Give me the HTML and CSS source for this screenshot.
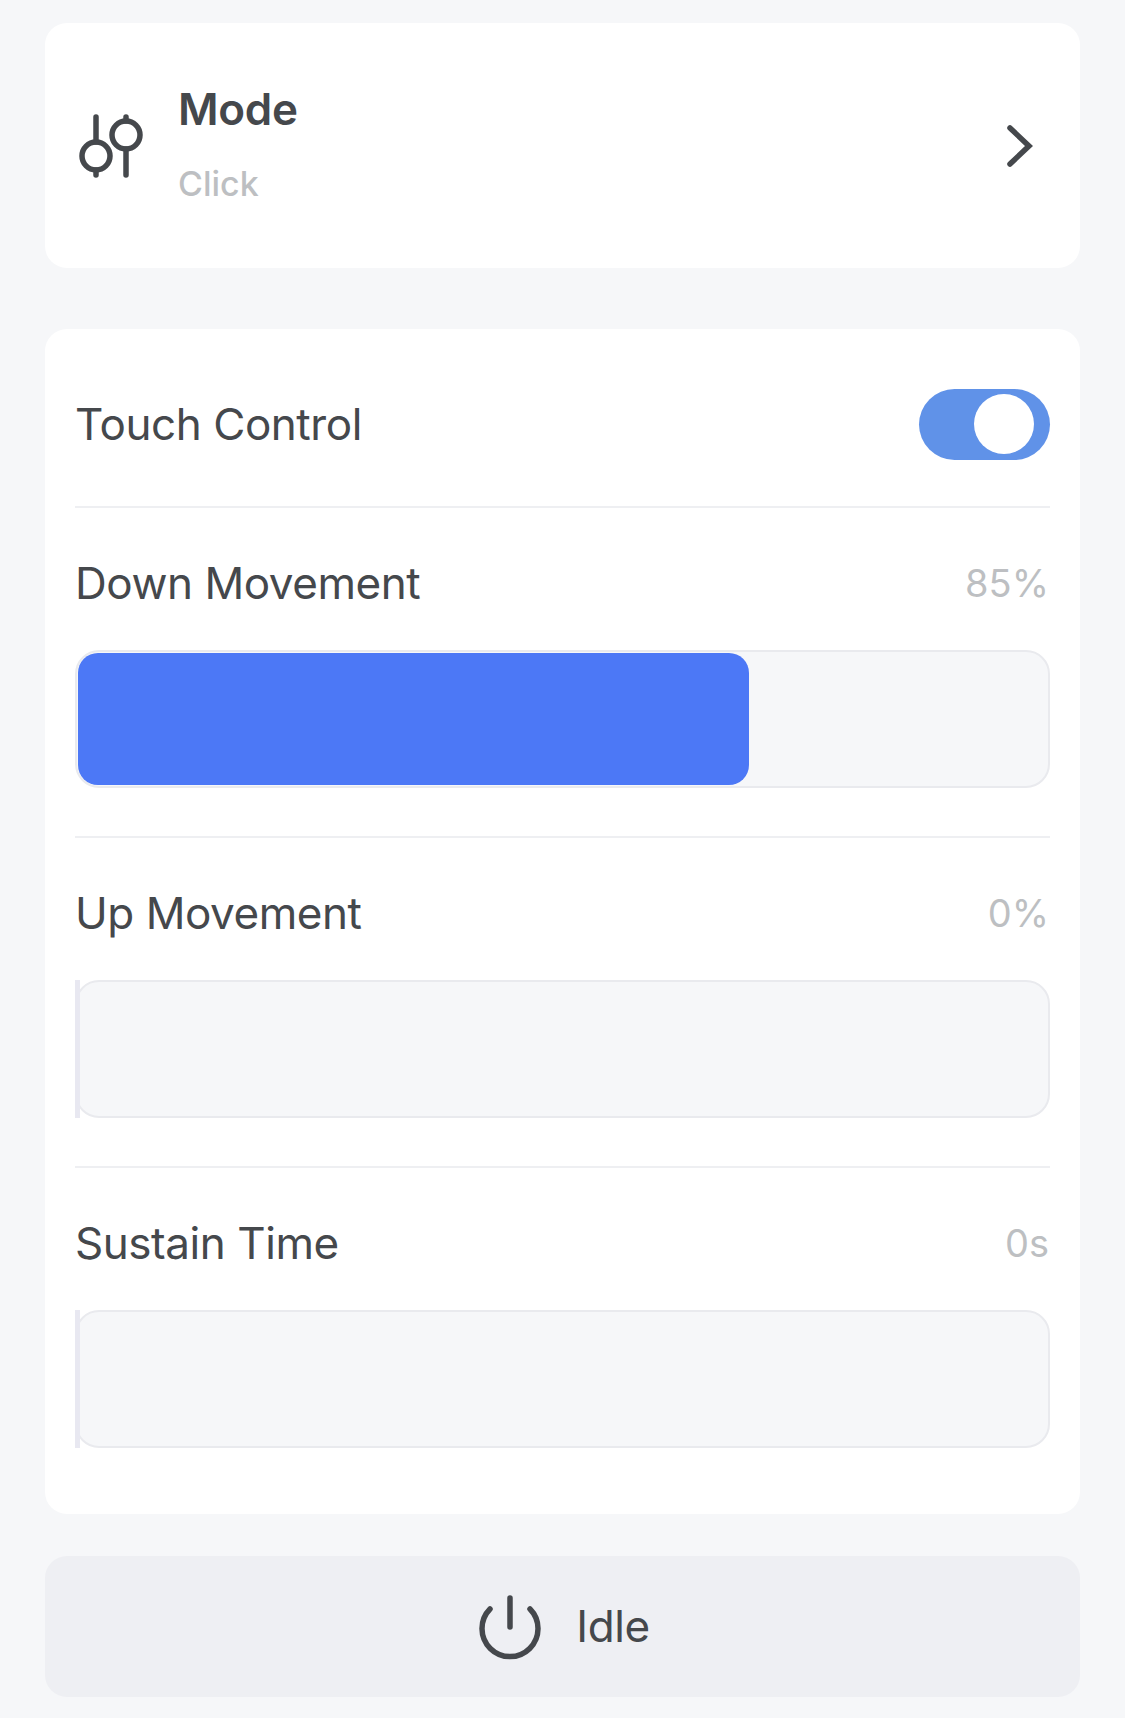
FILE: index.html
```html
<!DOCTYPE html>
<html lang="en">
<head>
  <meta charset="UTF-8">
  <title>Touch Control</title>
  <link rel="stylesheet" href="styles.css">
</head>
<body>

  <div class="card mode-card">
    <svg class="mode-icon" width="70" height="64" viewBox="0 0 70 64" fill="none">
      <path d="M19 3V28M19 56V61M49 3V7M49 35V61"/>
      <circle cx="19" cy="42" r="14"/>
      <circle cx="49" cy="21" r="14"/>
    </svg>
    <div class="mode-text">
      <div class="mode-title">Mode</div>
      <div class="mode-value">Click</div>
    </div>
    <svg class="chevron" width="27" height="44" viewBox="0 0 27 44" fill="none">
      <path d="M3 4L22 22L3 40"/>
    </svg>
  </div>

  <div class="card settings-card">
    <div class="row toggle-row">
      <span class="label">Touch Control</span>
      <div class="toggle"><div class="knob"></div></div>
    </div>

    <div class="row-block">
      <div class="row-head">
        <span class="label">Down Movement</span>
        <span class="value">85%</span>
      </div>
      <div class="track"><div class="fill" style="width: 671px"></div></div>
    </div>

    <div class="row-block">
      <div class="row-head">
        <span class="label">Up Movement</span>
        <span class="value">0%</span>
      </div>
      <div class="track"><div class="fill-empty"></div></div>
    </div>

    <div class="row-block last">
      <div class="row-head">
        <span class="label">Sustain Time</span>
        <span class="value">0s</span>
      </div>
      <div class="track"><div class="fill-empty"></div></div>
    </div>
  </div>

  <div class="idle-btn">
    <svg class="power" width="64" height="66" viewBox="0 0 64 66" fill="none">
      <path d="M32 3V32M12 14A28 28 0 1 0 52 14"/>
    </svg>
    <span class="idle-text">Idle</span>
  </div>

</body>
</html>
```

FILE: styles.css
```css
body {
  margin: 0;
  padding: 23px 45px 21px;
  background: #f6f7f9;
  font-family: Inter, "Liberation Sans", sans-serif;
  color: #45484c;
}
svg path, svg circle {
  stroke: #45484c;
  stroke-width: 5.5;
  stroke-linecap: round;
}
.card {
  background: #fff;
  border-radius: 22px;
}
.mode-card {
  height: 245px;
  margin-bottom: 61px;
  display: flex;
  align-items: center;
  padding: 0 46px 0 32px;
  box-sizing: border-box;
}
.mode-icon {
  margin-right: 31px;
}
.mode-text {
  flex: 1;
  padding-bottom: 4px;
}
.mode-title {
  font-size: 44px;
  font-weight: 600;
  line-height: 54px;
  letter-spacing: -0.3px;
}
.mode-value {
  font-size: 34px;
  font-weight: 500;
  line-height: 42px;
  margin-top: 27px;
  color: #bdbfc2;
}
.settings-card {
  height: 1185px;
  padding: 0 30px;
  box-sizing: border-box;
}
.row {
  display: flex;
  justify-content: space-between;
  align-items: center;
}
.toggle-row {
  height: 179px;
  padding-top: 13px;
  border-bottom: 2px solid #eeeff2;
  box-sizing: border-box;
}
.label {
  font-size: 44px;
  line-height: 54px;
  letter-spacing: -0.45px;
}
.value {
  font-size: 38px;
  line-height: 46px;
  color: #bdbfc2;
  margin-right: 1px;
}
.toggle {
  width: 131px;
  height: 71px;
  border-radius: 36px;
  background: #6092e8;
  display: flex;
  align-items: center;
  justify-content: flex-end;
  padding-right: 16px;
  box-sizing: border-box;
}
.knob {
  width: 60px;
  height: 60px;
  border-radius: 50%;
  background: #fff;
}
.row-block {
  height: 328px;
  border-bottom: 2px solid #eeeff2;
}
.row-block.last {
  border-bottom: none;
}
.row-head {
  display: flex;
  justify-content: space-between;
  align-items: center;
  padding-top: 48px;
  height: 54px;
  margin-bottom: 40px;
}
.track {
  height: 138px;
  box-sizing: border-box;
  border: 2px solid #e9eaee;
  border-radius: 24px;
  background: #f6f7f9;
  padding: 1px;
  display: flex;
}
.fill {
  background: #4c78f6;
  border-radius: 20px;
}
.fill-empty {
  width: 5px;
  margin: -3px 0 -3px -3px;
  background: #e8e8f1;
}
.idle-btn {
  height: 141px;
  margin-top: 42px;
  padding-left: 3px;
  border-radius: 22px;
  background: #eeeff3;
  display: flex;
  align-items: center;
  justify-content: center;
  gap: 34px;
}
.power {
  margin-top: 3px;
}
.idle-text {
  font-size: 44px;
  letter-spacing: -0.4px;
  margin-top: -2px;
}
```
